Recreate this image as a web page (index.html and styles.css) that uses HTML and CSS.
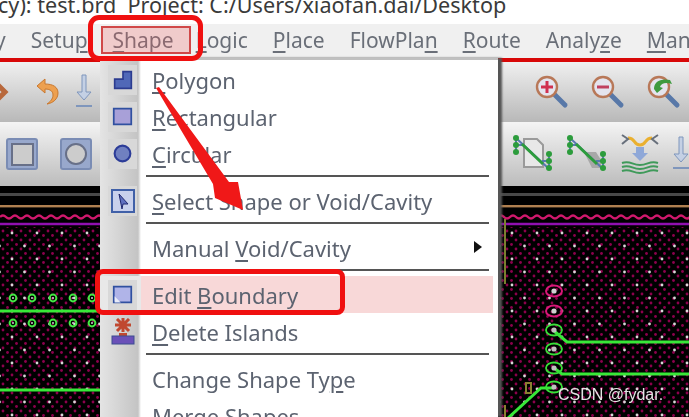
FILE: index.html
```html
<!DOCTYPE html>
<html lang="en">
<head>
    <meta charset="UTF-8">
    <meta name="viewport" content="width=device-width, initial-scale=1.0">
    <title>Shape menu</title>
    <link rel="stylesheet" href="styles.css">
</head>
<body>
<div class="shot">
    <div class="blurred">
        <div class="titlebar"><span>cy): test.brd&nbsp; Project: C:/Users/xiaofan.dai/Desktop</span></div>

        <nav class="menubar">
            <span class="menu-y">y</span>
            <span>Setu<u>p</u></span>
            <span><u>S</u>hape</span>
            <span class="menu-logic"><u>L</u>ogic</span>
            <span><u>P</u>lace</span>
            <span>FlowPla<u>n</u></span>
            <span><u>R</u>oute</span>
            <span>Analy<u>z</u>e</span>
            <span><u>M</u>an</span>
        </nav>
        <div class="redline"></div>

        <div class="toolbar toolbar-top">
            <div class="tool-group">
                <svg class="tool" width="9" height="36" viewBox="0 0 9 36"><path d="M-3 10l8 8-8 8" fill="none" stroke="#b8683c" stroke-width="5"/></svg>
                <svg class="tool tool-undo" width="24" height="30" viewBox="0 0 24 30"><path d="M10 2L2 9l8 7v-4c6 0 8 3 8 6 0 4-3 7-6 9 6-1 11-5 11-11 0-6-5-9-13-9z" fill="#eda050" stroke="#c87830"/></svg>
                <svg class="tool tool-down" width="18" height="36" viewBox="0 0 18 36"><path d="M7 1h4v17h5l-7 8-7-8h5z" fill="#c4d0e4" stroke="#7f96bc"/><path d="M1 32h16" stroke="#7f96bc" stroke-width="2"/></svg>
            </div>
            <div class="tool-group tool-group-zoom">
                <svg class="tool" width="36" height="36" viewBox="0 0 36 36"><use href="#lens"/><path d="M7 13h12M13 7v12" stroke="#d03050" stroke-width="3"/></svg>
                <svg class="tool" width="36" height="36" viewBox="0 0 36 36"><use href="#lens"/><path d="M7 13h12" stroke="#c04060" stroke-width="3"/></svg>
                <svg class="tool" width="36" height="36" viewBox="0 0 36 36"><use href="#lens"/><path d="M8 15c0-7 6-11 16-9l2 4c-6-2-11-1-12 3l3 1-6 5z" fill="#3f9a3f"/></svg>
            </div>
        </div>

        <div class="toolbar toolbar-bottom">
            <div class="tool-group tool-group-shapes">
                <div class="shape-btn"><i class="shape-square"></i></div>
                <div class="shape-btn"><i class="shape-circle"></i></div>
            </div>
            <div class="tool-group tool-group-route">
                <svg class="tool" width="42" height="40" viewBox="0 0 42 40"><path d="M12 5h13l6 6v22H12z" fill="#e8e8e8" stroke="#9a9a9a" stroke-width="2"/><use href="#net"/></svg>
                <svg class="tool" width="42" height="40" viewBox="0 0 42 40"><path d="M18 18h12l5 8v8H26z" fill="#a8a8a8"/><use href="#net"/></svg>
                <svg class="tool" width="40" height="40" viewBox="0 0 40 40"><path d="M8 4c8 0 5 7 12 7s4-7 12-7" fill="none" stroke="#eab030" stroke-width="3"/><path d="M2 1l6 4-6 5M38 1l-6 4 6 5" fill="none" stroke="#68707c" stroke-width="2"/><path d="M16 13h8v6h4l-8 8-8-8h4z" fill="#8fa8d8"/><path d="M2 29c8-3 10 2 18 2s10-5 18-2M2 33c8-3 10 2 18 2s10-5 18-2M2 37c8-3 10 2 18 2s10-5 18-2" fill="none" stroke="#3f9a5a" stroke-width="2"/></svg>
                <svg class="tool" width="18" height="36" viewBox="0 0 18 36"><path d="M7 1h4v17h5l-7 8-7-8h5z" fill="#c4d0e4" stroke="#7f96bc"/><path d="M1 32h16" stroke="#7f96bc" stroke-width="2"/></svg>
            </div>
        </div>

        <div class="board">
            <svg class="board-art" width="689" height="232" viewBox="0 185 689 232">
                <defs>
                    <pattern id="copper" width="9" height="9" patternUnits="userSpaceOnUse" x="1" y="228">
                        <circle cx="2" cy="2" r="1.4" fill="#8c004c"/>
                        <circle cx="6.5" cy="6.5" r="1.4" fill="#8c004c"/>
                    </pattern>
                    <pattern id="drills" width="25" height="26" patternUnits="userSpaceOnUse" x="6" y="226">
                        <circle cx="6" cy="6" r="1.4" fill="#d8d8d8"/>
                        <circle cx="18.5" cy="19" r="1.4" fill="#d8d8d8"/>
                    </pattern>
                    <g id="via-green"><ellipse rx="8" ry="5.5" fill="none" stroke="#38e038" stroke-width="1.8"/><circle r="2.6" fill="#c0c0c0"/></g>
                    <g id="via-pink"><ellipse rx="8" ry="5.5" fill="none" stroke="#d81878" stroke-width="2"/><circle r="2.6" fill="#d0d0d0"/></g>
                    <g id="pad"><circle r="3.4" fill="none" stroke="#44e844" stroke-width="2"/><circle r="1" fill="#d0d0d0"/></g>
                </defs>
                <rect x="0" y="185" width="689" height="232" fill="#000"/>
                <rect x="0" y="192" width="689" height="3" fill="#484848"/>
                <rect x="0" y="204" width="689" height="2.4" fill="#b08050"/>
                <rect x="0" y="226" width="689" height="191" fill="url(#copper)"/>
                <rect x="0" y="226" width="689" height="191" fill="url(#drills)"/>
                <path d="M0 216q3-3 6 0t6 0 6 0 6 0 6 0 6 0 6 0 6 0 6 0 6 0 6 0 6 0 6 0 6 0 6 0 6 0 6 0 M498 216q3-3 6 0t6 0 6 0 6 0 6 0 6 0 6 0 6 0 6 0 6 0 6 0 6 0 6 0 6 0 6 0 6 0 6 0 6 0 6 0 6 0 6 0 6 0 6 0 6 0 6 0 6 0 6 0 6 0 6 0 6 0 6 0 6 0" fill="none" stroke="#d0186c" stroke-width="2.4"/>
                <path d="M0 223h689" stroke="#9010b0" stroke-width="2.6"/>
                <path d="M505 218v65" stroke="#7a8030" stroke-width="2"/>
                <rect x="526" y="382" width="5" height="10" fill="none" stroke="#8a8030" stroke-width="2"/>
                <path d="M505 404v13" stroke="#8a8030" stroke-width="2"/>
                <path d="M0 310h100M0 389h100M554 330l13 11h122M554 367l8 6h127M508 417l33-30h13" fill="none" stroke="#38e838" stroke-width="3"/>
                <use href="#pad" x="13" y="297"/><use href="#pad" x="32" y="297"/><use href="#pad" x="53" y="297"/><use href="#pad" x="73" y="297"/><use href="#pad" x="92" y="297"/>
                <use href="#pad" x="13" y="322"/><use href="#pad" x="32" y="322"/><use href="#pad" x="53" y="322"/><use href="#pad" x="73" y="322"/><use href="#pad" x="92" y="322"/>
                <use href="#via-pink" x="554" y="290"/><use href="#via-pink" x="554" y="310"/>
                <use href="#via-green" x="554" y="329"/><use href="#via-green" x="554" y="348"/><use href="#via-green" x="554" y="367"/><use href="#via-green" x="554" y="386"/>
            </svg>
        </div>

        <div class="menu">
            <div class="menu-row"><div class="menu-tile"><svg width="20" height="20" viewBox="0 0 24 24"><path d="M12 2h10v20H2V11h10z" fill="#5068b8" stroke="#2c3c90" stroke-width="2"/></svg></div><span><u>P</u>olygon</span></div>
            <div class="menu-row"><div class="menu-tile"><svg width="21" height="21" viewBox="0 0 24 24"><rect x="2" y="3" width="20" height="18" fill="#a8a0d8" stroke="#3050a0" stroke-width="2"/></svg></div><span><u>R</u>ectangular</span></div>
            <div class="menu-row"><div class="menu-tile"><svg width="21" height="21" viewBox="0 0 24 24"><circle cx="12" cy="12" r="9" fill="#7080c0" stroke="#2c3c98" stroke-width="2.4"/></svg></div><span><u>C</u>ircular</span></div>
            <div class="menu-sep"></div>
            <div class="menu-row"><div class="menu-tile"><svg width="24" height="24" viewBox="0 0 24 24"><rect x="1" y="1" width="22" height="22" fill="#c8d0ec" stroke="#4060a8" stroke-width="2"/><path d="M8 5l9 10h-5l-1 5z" fill="#6070c0" stroke="#202870"/></svg></div><span><u>S</u>elect Shape or Void/Cavity</span></div>
            <div class="menu-sep"></div>
            <div class="menu-row"><span class="menu-noicon">Manual <u>V</u>oid/Cavity</span><i class="submenu-arrow"></i></div>
            <div class="menu-sep"></div>
            <div class="menu-row menu-row-active"><div class="menu-tile"><svg width="21" height="21" viewBox="0 0 24 24"><rect x="2" y="3" width="20" height="18" fill="#b0b4e8" stroke="#3050a0" stroke-width="2"/><path d="M3 14l7 7H3z" fill="#e8ecf8"/></svg></div><span>Edit <u>B</u>oundary</span></div>
            <div class="menu-row"><div class="menu-tile menu-tile-plain"><svg width="24" height="28" viewBox="0 0 24 28"><path d="M6 1l12 12M18 1L6 13M12 0v14M4 7h16" stroke="#c04830" stroke-width="3"/><path d="M8 15h8v3H8z" fill="#c04830"/><rect x="1" y="18" width="22" height="8" fill="#6a50b8" stroke="#3c4c90"/></svg></div><span><u>D</u>elete Islands</span></div>
            <div class="menu-sep"></div>
            <div class="menu-row"><span class="menu-noicon">Change Shape Ty<u>p</u>e</span></div>
            <div class="menu-row"><span class="menu-noicon">Merge Shapes</span></div>
        </div>
    </div>

    <svg width="0" height="0" class="defs">
        <defs>
            <g id="lens"><path d="M21 21l10 10" stroke="#5878a8" stroke-width="5" stroke-linecap="round"/><circle cx="13" cy="13" r="10" fill="#e4e4ee" stroke="#b87858" stroke-width="2.4"/></g>
            <g id="net"><path d="M4 4l32 30M4 4v14M4 11h8M37 34V20M37 27h-7" stroke="#5878b0" stroke-width="2" fill="none"/><path d="M10 10l21 20" stroke="#2c9c3c" stroke-width="3"/><g fill="#2c9c3c"><circle cx="4" cy="4" r="3"/><circle cx="4" cy="11" r="3"/><circle cx="4" cy="18" r="3"/><circle cx="37" cy="20" r="3"/><circle cx="37" cy="27" r="3"/><circle cx="37" cy="34" r="3"/></g></g>
        </defs>
    </svg>

    <div class="mark mark-menu"><div class="mark-inner"></div></div>
    <div class="mark mark-row"></div>
    <svg class="arrow" width="110" height="140" viewBox="0 0 110 140"><path d="M3 2l3-1 70 95 9 0 5 28-28-12-2-14z" fill="#f01818"/></svg>
    <div class="watermark">CSDN @fydar.</div>
</div>
</body>
</html>
```

FILE: styles.css
```css
html, body {
    margin: 0;
    padding: 0;
    background: #fff;
}
.shot {
    position: relative;
    width: 689px;
    height: 417px;
    overflow: hidden;
    font-family: "Noto Sans", Arial, sans-serif;
}
.blurred {
    height: 417px;
    filter: blur(0.7px);
}
.defs {
    position: absolute;
}
.titlebar {
    height: 24px;
    overflow: hidden;
    background: #fff;
    color: #3a3a3a;
    font-size: 21.6px;
    line-height: 24px;
    white-space: nowrap;
}
.titlebar span {
    display: block;
    margin-top: -7px;
    margin-left: -2px;
}
.menubar {
    display: flex;
    gap: 25px;
    height: 34px;
    overflow: hidden;
    margin-left: -5px;
    background: #f0f0f0;
    color: #6a6f78;
    font-size: 21px;
    line-height: 32px;
    white-space: nowrap;
}
.menu-logic {
    margin-left: -3px;
}
.menubar u, .menu u {
    text-decoration-thickness: 2px;
    text-underline-offset: 3px;
}
.redline {
    height: 4px;
    background: #d80808;
}
.toolbar {
    display: flex;
    justify-content: space-between;
    align-items: center;
    box-sizing: border-box;
}
.toolbar-top {
    height: 60px;
    background: linear-gradient(#f0f0f0, #b8b8b8);
}
.toolbar-bottom {
    height: 64px;
    background: linear-gradient(#f4f4f4, #bcbcbc);
}
.tool-group {
    display: flex;
    align-items: center;
}
.tool-undo {
    margin-left: 26px;
}
.tool-down {
    margin-left: 16px;
}
.tool-group-zoom {
    gap: 20px;
    margin-right: 7px;
}
.tool-group-shapes {
    gap: 22px;
    margin-left: 6px;
}
.shape-btn {
    display: flex;
    align-items: center;
    justify-content: center;
    box-sizing: border-box;
    width: 32px;
    height: 32px;
    background: #98a8cc;
    border: 2px solid #7a8cb4;
    border-radius: 3px;
}
.shape-square {
    width: 19px;
    height: 19px;
    background: #ccc;
    border: 2px solid #687088;
}
.shape-circle {
    width: 18px;
    height: 18px;
    background: #ccc;
    border: 2px solid #687088;
    border-radius: 50%;
}
.tool-group-route {
    gap: 12px;
    margin-right: -1px;
}
.board {
    height: 231px;
}
.board-art {
    display: block;
}
.menu {
    position: absolute;
    left: 100px;
    top: 58px;
    width: 398px;
    height: 359px;
    box-sizing: border-box;
    padding-top: 1px;
    background: linear-gradient(90deg, #e4e4e4 0, #c4c4c4 38px, #fff 41px);
    border-top: 2px solid #c0c0c0;
    box-shadow: 4px 0 2px #555;
    color: #5c6370;
    font-size: 22px;
}
.menu-row {
    display: flex;
    align-items: center;
    height: 37px;
    padding-left: 8px;
    position: relative;
    white-space: nowrap;
}
.menu-tile {
    display: flex;
    align-items: center;
    justify-content: center;
    flex: none;
    width: 29px;
    height: 30px;
    background: #d8d8d8;
}
.menu-tile-plain {
    background: none;
}
.menu-row span {
    margin-left: 15px;
}
.menu-row .menu-noicon {
    margin-left: 44px;
}
.menu-row-active {
    background: linear-gradient(90deg, #e8e8e8 0, #e8e8e8 41px, #f8d8d8 41px);
    margin-right: 5px;
}
.menu-sep {
    height: 10px;
    box-sizing: border-box;
    padding-top: 3px;
    margin-left: 46px;
    margin-right: 9px;
}
.menu-sep::before {
    content: "";
    display: block;
    height: 2px;
    background: #555;
}
.submenu-arrow {
    position: absolute;
    right: 16px;
    top: 12px;
    border-left: 8px solid #111;
    border-top: 6px solid transparent;
    border-bottom: 6px solid transparent;
}
.mark {
    position: absolute;
    box-sizing: border-box;
    border: 5px solid #f01010;
}
.mark-menu {
    left: 88px;
    top: 15px;
    width: 115px;
    height: 46px;
    border-radius: 11px;
    padding: 6px 7px 2px 8px;
}
.mark-inner {
    height: 100%;
    box-sizing: border-box;
    border: 2px solid #d04848;
    background: rgba(240, 90, 90, 0.25);
}
.mark-row {
    left: 95px;
    top: 269px;
    width: 250px;
    height: 46px;
    border-radius: 8px;
}
.arrow {
    position: absolute;
    left: 153px;
    top: 86px;
}
.watermark {
    position: absolute;
    left: 558px;
    top: 385px;
    color: #e4e4e4;
    font-family: "Liberation Sans", Arial, sans-serif;
    font-size: 16px;
    line-height: 20px;
    white-space: nowrap;
}
```
